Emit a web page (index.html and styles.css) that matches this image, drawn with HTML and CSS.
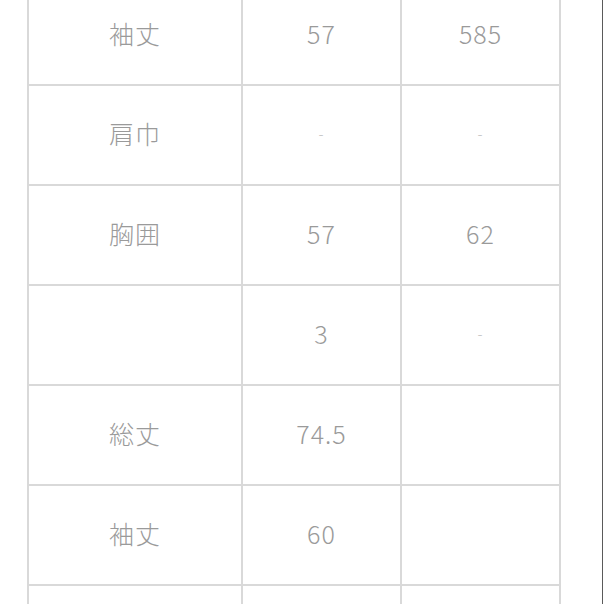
FILE: index.html
```html
<!DOCTYPE html>
<html lang="ja">
<head>
<meta charset="utf-8">
<link rel="stylesheet" href="styles.css">
</head>
<body>
<div class="page">
  <div class="sheet">
    <div class="cell label">袖丈</div><div class="cell">57</div><div class="cell">585</div>
    <div class="cell label">肩巾</div><div class="cell dash">-</div><div class="cell dash">-</div>
    <div class="cell label">胸囲</div><div class="cell">57</div><div class="cell">62</div>
    <div class="cell label"></div><div class="cell">3</div><div class="cell dash">-</div>
    <div class="cell label">総丈</div><div class="cell">74.5</div><div class="cell"></div>
    <div class="cell label">袖丈</div><div class="cell">60</div><div class="cell"></div>
    <div class="cell label"></div><div class="cell"></div><div class="cell"></div>
  </div>
</div>
</body>
</html>
```

FILE: styles.css
```css
html, body {
  margin: 0;
  padding: 0;
  background: #ffffff;
}
body {
  width: 604px;
  height: 604px;
  overflow: hidden;
}
.page {
  width: 602px;
  height: 604px;
  border-right: 1px solid #5a5a5a;
  overflow: hidden;
}
.sheet {
  margin: -16px 0 0 27px;
  width: 530px;
  display: grid;
  grid-template-columns: 212px 157px 157px;
  grid-auto-rows: 98px;
  gap: 2px;
  padding: 2px;
  background: #d9d9d9;
}
.cell {
  background: #ffffff;
  display: flex;
  align-items: center;
  justify-content: center;
  padding-bottom: 4px;
  box-sizing: border-box;
  font-family: "Noto Sans CJK JP", "Noto Sans", sans-serif;
  font-size: 25px;
  font-weight: 300;
  color: #9a9a9a;
  letter-spacing: 1px;
}
.dash {
  font-size: 15px;
  color: #bdbdbd;
}
```
